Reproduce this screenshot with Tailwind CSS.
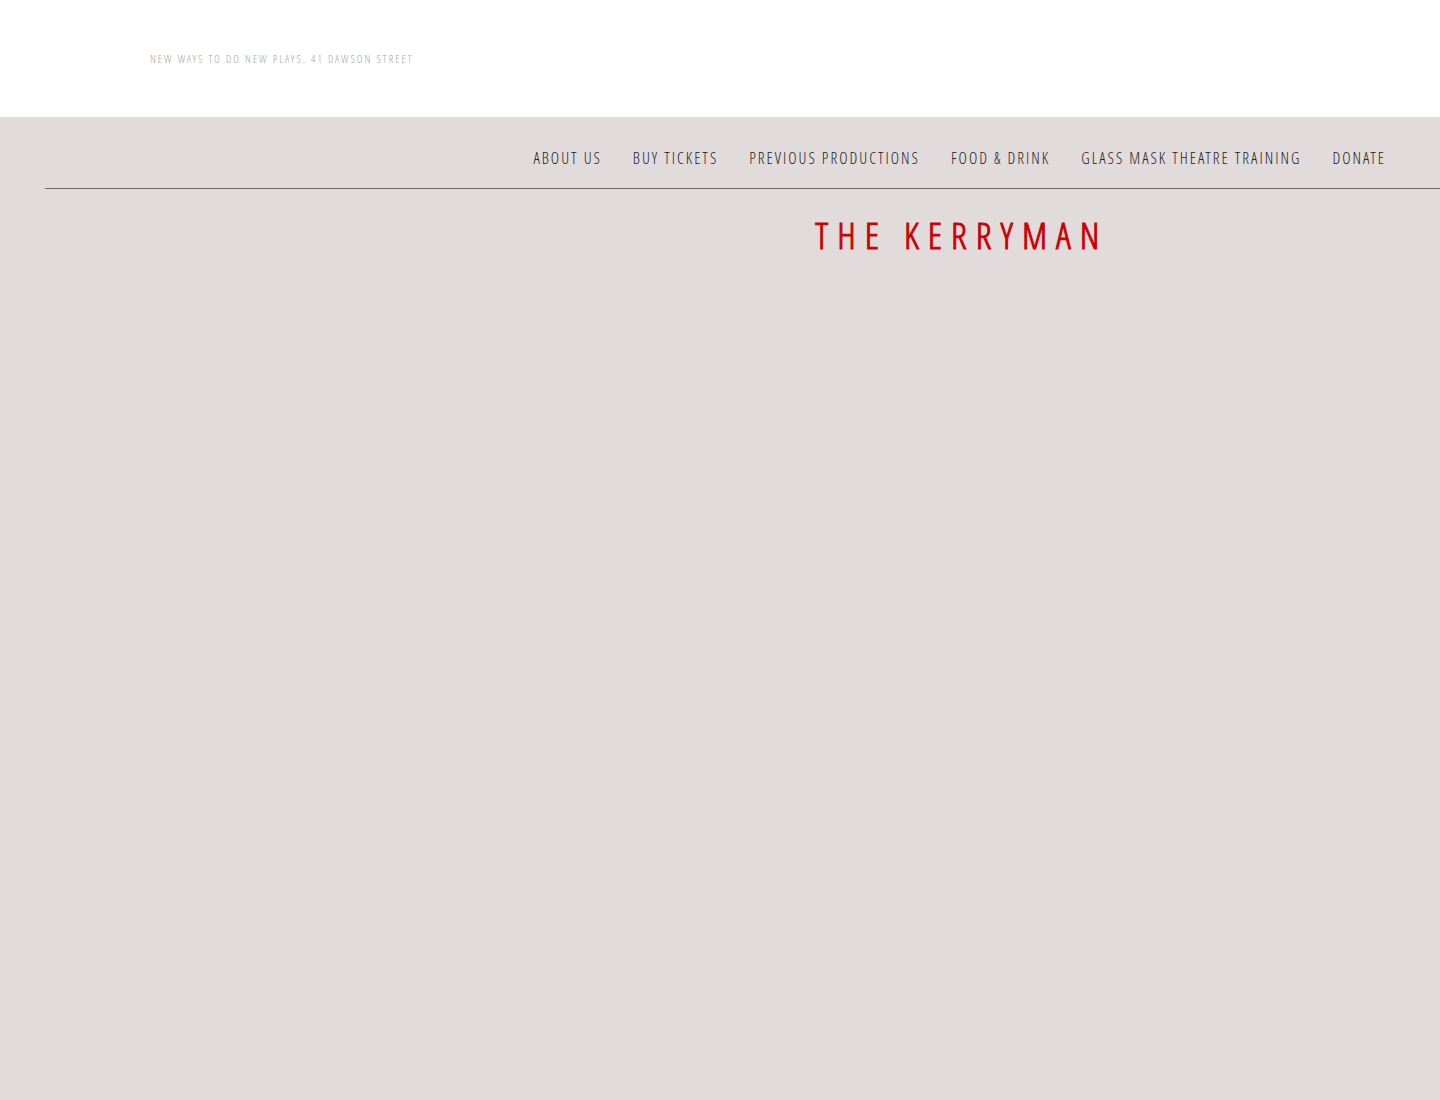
<!DOCTYPE html>
<html lang="en">
<head>
    <meta charset="UTF-8">
    <meta name="viewport" content="width=device-width, initial-scale=1.0">
    <title>The Kerryman - Glass Mask Theatre</title>
    <script src="https://cdn.jsdelivr.net/npm/@tailwindcss/browser@4"></script>
</head>
<body class="flex min-h-screen flex-col bg-[#e1dbdb] font-['Open_Sans_Condensed_Light','Roboto_Condensed',sans-serif] uppercase">
    <!-- Tagline -->
    <header class="bg-white px-[150px] py-[51px]">
        <p class="text-[11px] leading-[15px] tracking-[2px] text-[#aaa4a2]">New ways to do new plays. 41 Dawson Street</p>
    </header>

    <!-- Navigation -->
    <nav class="ml-[45px] flex flex-wrap justify-end gap-x-[31px] border-b border-[#6b6b68] pt-[29px] pr-[54px] pb-[18px] text-base tracking-[2px] whitespace-nowrap text-[#222220]">
        <a href="#about">About us</a>
        <a href="#tickets">Buy tickets</a>
        <a href="#productions">Previous productions</a>
        <a href="#food">Food &amp; drink</a>
        <a href="#training">Glass Mask Theatre Training</a>
        <a href="#donate">Donate</a>
    </nav>

    <!-- Main Content -->
    <main class="flex-1 pt-[22px] pl-[33.6%]">
        <h1 class="text-center text-[37px] leading-12 tracking-[9px] text-[#cc0000] [-webkit-text-stroke:1px_#cc0000]">The Kerryman</h1>
    </main>
</body>
</html>
